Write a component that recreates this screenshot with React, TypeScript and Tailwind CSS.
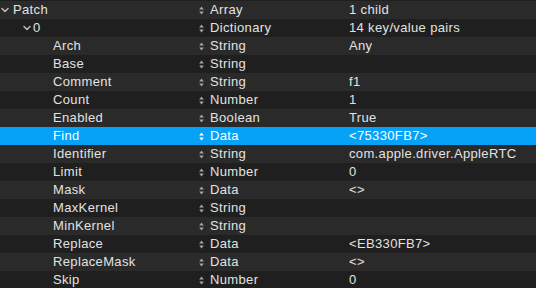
const rows: { key: string; level: number; type: string; value: string; open?: boolean }[] = [
  { key: "Patch", level: 0, type: "Array", value: "1 child", open: true },
  { key: "0", level: 1, type: "Dictionary", value: "14 key/value pairs", open: true },
  { key: "Arch", level: 2, type: "String", value: "Any" },
  { key: "Base", level: 2, type: "String", value: "" },
  { key: "Comment", level: 2, type: "String", value: "f1" },
  { key: "Count", level: 2, type: "Number", value: "1" },
  { key: "Enabled", level: 2, type: "Boolean", value: "True" },
  { key: "Find", level: 2, type: "Data", value: "<75330FB7>" },
  { key: "Identifier", level: 2, type: "String", value: "com.apple.driver.AppleRTC" },
  { key: "Limit", level: 2, type: "Number", value: "0" },
  { key: "Mask", level: 2, type: "Data", value: "<>" },
  { key: "MaxKernel", level: 2, type: "String", value: "" },
  { key: "MinKernel", level: 2, type: "String", value: "" },
  { key: "Replace", level: 2, type: "Data", value: "<EB330FB7>" },
  { key: "ReplaceMask", level: 2, type: "Data", value: "<>" },
  { key: "Skip", level: 2, type: "Number", value: "0" },
];

function Chevron() {
  return (
    <svg width="8" height="6" viewBox="0 0 8 6" className="shrink-0">
      <polyline points="1,1.5 4,4.5 7,1.5" fill="none" stroke="#bdbdbd" strokeWidth="1.5" strokeLinecap="round" strokeLinejoin="round" />
    </svg>
  );
}

function Stepper({ active }: { active: boolean }) {
  const c = active ? "#ffffff" : "#a8a8a8";
  return (
    <svg width="5" height="9" viewBox="0 0 5 9" className="shrink-0">
      <polygon points="2.5,0.5 4.8,3.6 0.2,3.6" fill={c} />
      <polygon points="0.2,5.4 4.8,5.4 2.5,8.5" fill={c} />
    </svg>
  );
}

export default function App() {
  return (
    <div className="h-[288px] w-[536px] overflow-hidden bg-[#1f1f1f] pt-px font-['Liberation_Sans',Arial,sans-serif] text-[13px] tracking-[0.35px] text-[#e2e2e2]">
      {rows.map((r, i) => {
        const selected = r.key === "Find";
        const bg = selected ? "bg-[#05a2f8] text-white" : i % 2 === 0 ? "bg-[#2a2a2a]" : "bg-[#1f1f1f]";
        return (
          <div key={r.key} className={`flex h-[18px] items-center leading-[18px] ${bg}`}>
            <div className="flex w-[199px] shrink-0 items-center">
              {r.level === 0 && (
                <div className="flex items-center gap-[4px] pl-[1px]">
                  <Chevron />
                  <span>{r.key}</span>
                </div>
              )}
              {r.level === 1 && (
                <div className="flex items-center gap-[2px] pl-[23px]">
                  <Chevron />
                  <span>{r.key}</span>
                </div>
              )}
              {r.level === 2 && <span className="pl-[53px]">{r.key}</span>}
            </div>
            <div className="flex w-[150px] shrink-0 items-center gap-[6px]">
              <Stepper active={selected} />
              <span>{r.type}</span>
            </div>
            <div className="truncate">{r.value}</div>
          </div>
        );
      })}
    </div>
  );
}
